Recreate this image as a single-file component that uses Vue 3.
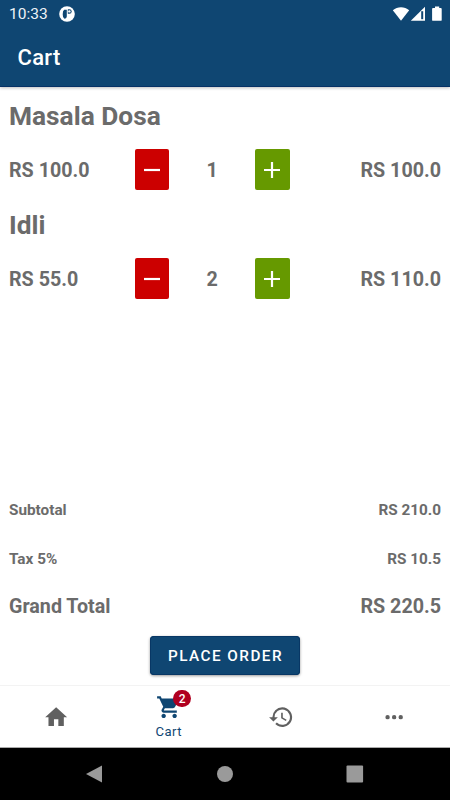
<script setup>
import { ref, computed } from 'vue'

const TAX_RATE = 5

const items = ref([
  { name: 'Masala Dosa', price: 100, quantity: 1 },
  { name: 'Idli', price: 55, quantity: 2 },
])

const subtotal = computed(() => items.value.reduce((sum, item) => sum + item.price * item.quantity, 0))
const tax = computed(() => (subtotal.value * TAX_RATE) / 100)
const grandTotal = computed(() => subtotal.value + tax.value)

const formatPrice = (value) => `RS ${value.toFixed(1)}`

const decrease = (item) => {
  if (item.quantity > 1) item.quantity--
}

const increase = (item) => {
  item.quantity++
}
</script>

<template>
  <div class="screen">
    <header class="header">
      <div class="status-bar">
        <span class="time">10:33</span>
        <svg class="status-app" viewBox="0 0 16 16">
          <circle cx="8" cy="8" r="7.8" fill="#fff" />
          <path d="M5.2 3.8h2.6v6.8a2.2 2.2 0 0 1-2.6 2q-1.5-1-1.5-4.4t1.5-4.4z" fill="#0f4672" />
          <path d="M8.8 3.2h1.6a2.3 2.3 0 0 1 0 4.6H8.8z" fill="#0f4672" />
          <circle cx="10.4" cy="5.4" r="1.2" fill="#fff" />
        </svg>
        <svg class="status-icons" viewBox="0 0 52 18">
          <path d="M0.8 5.2C5.6 1.1 12.4 1.1 17.2 5.2L9 15.8z" fill="#fff" />
          <path d="M33 1.8V15.8H18.8z" fill="#fff" />
          <path d="M29.2 6.2h2v8h-2z" fill="#0f4672" />
          <path d="M41 3h2V1.4h4.2V3h1.6q.9 0 .9.9v11q0 .9-.9.9h-7.8q-.9 0-.9-.9v-11q0-.9.9-.9z" fill="#fff" />
        </svg>
      </div>
      <h1 class="title">Cart</h1>
    </header>

    <main class="content">
      <section v-for="item in items" :key="item.name" class="item">
        <h2 class="item-name">{{ item.name }}</h2>
        <div class="item-row">
          <span class="price">{{ formatPrice(item.price) }}</span>
          <button type="button" class="step minus" aria-label="Decrease" @click="decrease(item)">
            <svg viewBox="0 0 16 16"><path d="M0 8h16" /></svg>
          </button>
          <span class="quantity">{{ item.quantity }}</span>
          <button type="button" class="step plus" aria-label="Increase" @click="increase(item)">
            <svg viewBox="0 0 16 16"><path d="M0 8h16M8 0v16" /></svg>
          </button>
          <span class="price amount">{{ formatPrice(item.price * item.quantity) }}</span>
        </div>
      </section>
    </main>

    <section class="summary">
      <div class="line">
        <span>Subtotal</span>
        <span>{{ formatPrice(subtotal) }}</span>
      </div>
      <div class="line">
        <span>Tax {{ TAX_RATE }}%</span>
        <span>{{ formatPrice(tax) }}</span>
      </div>
      <div class="line total">
        <span>Grand Total</span>
        <span>{{ formatPrice(grandTotal) }}</span>
      </div>
      <button type="button" class="order">PLACE ORDER</button>
    </section>

    <nav class="tabs">
      <a class="tab">
        <svg class="icon" viewBox="0 0 24 24"><path d="M10 20v-6h4v6h5v-8h3L12 3 2 12h3v8z" /></svg>
      </a>
      <a class="tab active">
        <span class="cart-icon">
          <svg class="icon" viewBox="0 0 24 24">
            <path d="M7 18c-1.1 0-1.99.9-1.99 2S5.9 22 7 22s2-.9 2-2-.9-2-2-2zM1 2v2h2l3.6 7.59-1.35 2.45c-.16.28-.25.61-.25.96 0 1.1.9 2 2 2h12v-2H7.42c-.14 0-.25-.11-.25-.25l.03-.12.9-1.63h7.45c.75 0 1.41-.41 1.75-1.03l3.58-6.49A1 1 0 0 0 20 4H5.21l-.94-2H1zm16 16c-1.1 0-1.99.9-1.99 2s.89 2 1.99 2 2-.9 2-2-.9-2-2-2z" />
          </svg>
          <span class="badge">{{ items.length }}</span>
        </span>
        <span class="tab-label">Cart</span>
      </a>
      <a class="tab">
        <svg class="icon" viewBox="0 0 24 24">
          <path d="M13 3a9 9 0 0 0-9 9H1l3.89 3.89.07.14L9 12H6a7 7 0 1 1 2.06 4.94l-1.42 1.42A9 9 0 1 0 13 3zm-1 5v5l4.28 2.54.72-1.21-3.5-2.08V8z" />
        </svg>
      </a>
      <a class="tab">
        <svg class="icon" viewBox="0 0 24 24">
          <path d="M6 10a2 2 0 1 0 0 4 2 2 0 0 0 0-4zm12 0a2 2 0 1 0 0 4 2 2 0 0 0 0-4zm-6 0a2 2 0 1 0 0 4 2 2 0 0 0 0-4z" />
        </svg>
      </a>
    </nav>

    <footer class="system-bar">
      <svg viewBox="0 0 18 20"><path d="M16 1.4v17.2L0 10z" /></svg>
      <svg viewBox="0 0 18 20"><circle cx="9" cy="10" r="8" /></svg>
      <svg viewBox="0 0 18 20"><rect x="0.5" y="1.6" width="16.6" height="16.8" rx="1" /></svg>
    </footer>
  </div>
</template>

<style>
body {
  margin: 0;
}
</style>

<style scoped>
.screen {
  display: flex;
  flex-direction: column;
  width: 450px;
  height: 800px;
  overflow: hidden;
  background: #fff;
  color: #6b6b6b;
  font-family: Roboto, sans-serif;
}

h1,
h2 {
  margin: 0;
}

button {
  padding: 0;
  border: none;
  font-family: inherit;
  color: #fff;
  cursor: pointer;
}

.header {
  box-sizing: border-box;
  flex: none;
  height: 87px;
  background: #0f4672;
  border-bottom: 1px solid #073266;
  box-shadow: 0 1px 3px rgba(0, 0, 0, 0.25);
  color: #fff;
}

.status-bar {
  display: flex;
  align-items: center;
  height: 27px;
  padding: 0 6px 0 9px;
}

.time {
  width: 50px;
  padding-top: 1px;
  color: #eef3f7;
  font-size: 15.5px;
}

.status-app {
  width: 16px;
  height: 16px;
}

.status-icons {
  width: 52px;
  height: 18px;
  margin-left: auto;
}

.title {
  padding-left: 17.5px;
  font-size: 22px;
  font-weight: 500;
  line-height: 62px;
  letter-spacing: 0.3px;
}

.content {
  flex: 1;
  padding: 12px 9px 0;
}

.item {
  height: 109.3px;
}

.item-name {
  height: 50px;
  font-size: 26.3px;
  font-weight: 700;
  line-height: 35px;
}

.item-row {
  display: grid;
  grid-template-columns: 125.5px 34.8px 85.5px 34.8px 1fr;
  align-items: center;
  height: 41px;
}

.price,
.quantity {
  padding-top: 2px;
  font-size: 19.7px;
  font-weight: 700;
}

.quantity {
  text-align: center;
}

.amount {
  text-align: right;
}

.step {
  display: flex;
  align-items: center;
  justify-content: center;
  height: 41px;
  border-radius: 2px;
}

.step svg {
  width: 16px;
  height: 16px;
  fill: none;
  stroke: #fff;
  stroke-width: 2.2;
}

.minus {
  background: #cc0000;
}

.plus {
  background: #669900;
}

.summary {
  display: flex;
  flex-direction: column;
  height: 200px;
  padding: 0 9px;
}

.line {
  display: flex;
  align-items: center;
  justify-content: space-between;
  height: 49px;
  font-size: 15.3px;
  font-weight: 700;
}

.total {
  height: 46px;
  font-size: 19.7px;
}

.order {
  align-self: center;
  width: 150px;
  height: 39px;
  margin-top: 7px;
  padding: 1px 0 0 1px;
  border-radius: 4px;
  background: #0f4672;
  box-shadow: 0 1px 3px rgba(0, 0, 0, 0.4), inset 0 0 0 1px #083765;
  font-size: 15.3px;
  font-weight: 500;
  letter-spacing: 1.45px;
}

.tabs {
  box-sizing: border-box;
  display: grid;
  grid-template-columns: repeat(4, 1fr);
  height: 63px;
  border-top: 1px solid #f3f3f3;
  border-bottom: 1px solid #aaa;
}

.tab {
  display: flex;
  flex-direction: column;
  align-items: center;
  justify-content: center;
}

.tab:not(.active) {
  padding-top: 1px;
}

.icon {
  display: block;
  width: 26.3px;
  height: 26.3px;
  fill: #606060;
}

.active {
  padding-top: 3px;
  color: #0f4672;
}

.active .icon {
  fill: #0f4672;
}

.cart-icon {
  position: relative;
}

.badge {
  position: absolute;
  top: -4px;
  right: -9px;
  width: 17.5px;
  height: 17.5px;
  border-radius: 50%;
  background: #b00020;
  color: #fff;
  font-size: 12px;
  font-weight: 500;
  line-height: 18px;
  text-align: center;
}

.tab-label {
  margin-top: 1px;
  font-size: 13.1px;
  line-height: 21px;
  letter-spacing: 0.4px;
}

.system-bar {
  display: flex;
  align-items: center;
  justify-content: center;
  gap: 112px;
  height: 52px;
  background: #000;
}

.system-bar svg {
  width: 18px;
  height: 20px;
  fill: #9a9a9a;
}
</style>
